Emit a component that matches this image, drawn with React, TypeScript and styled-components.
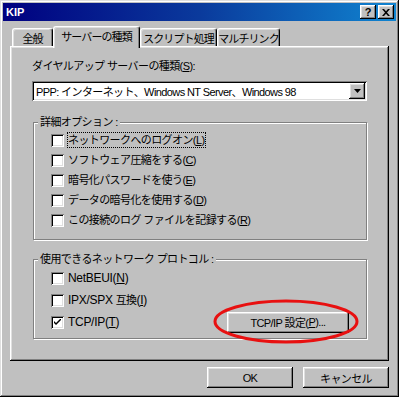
import React from 'react'
import styled, { createGlobalStyle } from 'styled-components'

const GlobalStyle = createGlobalStyle`
  html, body {
    margin: 0;
    padding: 0;
    background: #c0c0c0;
  }
  body {
    font-family: "Liberation Sans", "Noto Sans CJK JP", sans-serif;
    font-size: 11px;
    letter-spacing: -0.6px;
    color: #000;
  }
`

const raised = `
  box-shadow: inset -1px -1px #000, inset 1px 1px #fff, inset -2px -2px #808080, inset 2px 2px #dfdfdf;
`

const sunken = `
  box-shadow: inset 1px 1px #808080, inset -1px -1px #fff, inset 2px 2px #000, inset -2px -2px #dfdfdf;
`

const Window = styled.div`
  width: 399px;
  height: 397px;
  box-sizing: border-box;
  padding: 3px;
  background: #c0c0c0;
  box-shadow: inset -1px -1px #000, inset 1px 1px #dfdfdf, inset -2px -2px #808080, inset 2px 2px #fff;
  display: flex;
  flex-direction: column;
`

const TitleBar = styled.div`
  height: 18px;
  display: flex;
  align-items: center;
  padding: 0 2px 0 3px;
  background: linear-gradient(90deg, #000080 0%, #0a3a9c 50%, #1084d0 100%);
`

const TitleText = styled.span`
  flex: 1;
  color: #fff;
  font-family: "Liberation Sans", sans-serif;
  font-weight: bold;
  font-size: 11px;
  letter-spacing: 0;
`

const TitleButton = styled.div<{ gap?: number }>`
  width: 16px;
  height: 14px;
  margin-left: ${({ gap }) => gap ?? 0}px;
  background: #c0c0c0;
  ${raised}
  display: flex;
  align-items: center;
  justify-content: center;
  font-family: "Liberation Sans", sans-serif;
  font-weight: bold;
  font-size: 11px;
  letter-spacing: 0;
  line-height: 14px;
`

const Body = styled.div`
  padding: 5px 7px 0 7px;
  display: flex;
  flex-direction: column;
`

const TabRow = styled.div`
  height: 20px;
  display: flex;
  align-items: flex-end;
  padding-left: 2px;
`

const Tab = styled.div<{ width: number; active?: boolean }>`
  position: relative;
  z-index: ${({ active }) => (active ? 1 : 0)};
  flex: none;
  width: ${({ width }) => width}px;
  height: ${({ active }) => (active ? 22 : 18)}px;
  margin-bottom: ${({ active }) => (active ? -2 : 0)}px;
  box-sizing: border-box;
  background: #c0c0c0;
  border-top: 1px solid #fff;
  border-left: 1px solid #fff;
  border-right: 1px solid #000;
  border-radius: 3px 3px 0 0;
  box-shadow: inset -1px 0 #808080, inset 1px 1px #dfdfdf;
  display: flex;
  align-items: center;
  justify-content: center;
  padding-bottom: ${({ active }) => (active ? 3 : 0)}px;
  white-space: nowrap;
  overflow: hidden;
  font-size: 11px;
  letter-spacing: -0.9px;
`

const Panel = styled.div`
  height: 315px;
  box-sizing: border-box;
  padding: 13px 22px 0 22px;
  box-shadow: inset -1px -1px #000, inset 1px 1px #fff, inset -2px -2px #808080, inset 2px 2px #dfdfdf;
  display: flex;
  flex-direction: column;
`

const FieldLabel = styled.div`
  line-height: 14px;
  height: 14px;
  white-space: nowrap;
`

const ComboBox = styled.div`
  margin-top: 8px;
  height: 20px;
  box-sizing: border-box;
  padding: 2px;
  background: #fff;
  ${sunken}
  display: flex;
  align-items: center;
`

const ComboText = styled.div`
  flex: 1;
  padding-left: 2px;
  white-space: nowrap;
  overflow: hidden;
`

const ArrowButton = styled.div`
  width: 16px;
  height: 16px;
  background: #c0c0c0;
  ${raised}
  display: flex;
  align-items: center;
  justify-content: center;
`

const Group = styled.div<{ top: number; bottom: number }>`
  position: relative;
  margin: ${({ top }) => top}px 0 0 1px;
  padding-bottom: ${({ bottom }) => bottom}px;
  border: 1px solid #808080;
  box-shadow: 1px 1px 0 #fff, inset 1px 1px 0 #fff;
  display: flex;
  flex-direction: column;
`

const Legend = styled.div`
  align-self: flex-start;
  margin: -8px 0 0 4px;
  padding: 0 2px;
  background: #c0c0c0;
  line-height: 14px;
  height: 14px;
  white-space: nowrap;
`

const Rows = styled.div<{ top: number }>`
  margin-top: ${({ top }) => top}px;
  padding: 0 17px 0 17px;
  display: flex;
  flex-direction: column;
`

const CheckRow = styled.div<{ h: number }>`
  height: ${({ h }) => h}px;
  display: flex;
  align-items: center;
  white-space: nowrap;
`

const CheckBox = styled.div`
  width: 13px;
  height: 13px;
  flex: none;
  box-sizing: border-box;
  background: #fff;
  ${sunken}
  display: flex;
  align-items: center;
  justify-content: center;
  margin-right: 3px;
`

const CheckLabel = styled.span<{ focused?: boolean }>`
  line-height: 14px;
  padding: 1px 1px;
  outline: ${({ focused }) => (focused ? '1px dotted #000' : 'none')};
  outline-offset: -1px;
`

const Latin = styled.span`
  font-size: 12px;
  letter-spacing: -0.3px;
`

const Key = styled.u`
  text-decoration: underline;
  text-underline-offset: 1px;
`

const ButtonWrap = styled.div`
  position: relative;
  margin-left: auto;
`

const PushButton = styled.div<{ width: number }>`
  width: ${({ width }) => width}px;
  height: 21px;
  box-sizing: border-box;
  background: #c0c0c0;
  ${raised}
  display: flex;
  align-items: center;
  justify-content: center;
  white-space: nowrap;
`

const Annotation = styled.svg`
  position: absolute;
  left: -14px;
  top: -13px;
  pointer-events: none;
`

const Footer = styled.div`
  margin-top: 6px;
  display: flex;
  justify-content: flex-end;
  gap: 10px;
`

const Check = () => (
  <svg width="7" height="7" viewBox="0 0 7 7">
    <path d="M0 2 L0 4 L2 6 L7 1 L7 -1 L2 4 Z" fill="#000" />
  </svg>
)

type OptionProps = {
  label: React.ReactNode
  mnemonic: string
  checked?: boolean
  focused?: boolean
  latin?: boolean
  h: number
  children?: React.ReactNode
}

const Option = (props: OptionProps) => (
  <CheckRow h={props.h}>
    <CheckBox>{props.checked && <Check />}</CheckBox>
    <CheckLabel focused={props.focused}>
      {props.label}
      {props.latin ? (
        <Latin>(<Key>{props.mnemonic}</Key>)</Latin>
      ) : (
        <>(<Key>{props.mnemonic}</Key>)</>
      )}
    </CheckLabel>
    {props.children}
  </CheckRow>
)

const App = () => {
  return (
    <React.Fragment>
      <GlobalStyle />
      <Window>
        <TitleBar>
          <TitleText>KIP</TitleText>
          <TitleButton>?</TitleButton>
          <TitleButton gap={2}>
            <svg width="8" height="7" viewBox="0 0 8 7">
              <path d="M0 0h2l2 2.2L6 0h2L5 3.5 8 7H6L4 4.8 2 7H0l3-3.5z" fill="#000" />
            </svg>
          </TitleButton>
        </TitleBar>

        <Body>
          <TabRow>
            <Tab width={41}>全般</Tab>
            <Tab width={87} active>サーバーの種類</Tab>
            <Tab width={77}>スクリプト処理</Tab>
            <Tab width={63}>マルチリンク</Tab>
          </TabRow>

          <Panel>
            <FieldLabel>ダイヤルアップ サーバーの種類(<Key>S</Key>):</FieldLabel>
            <ComboBox>
              <ComboText>PPP: インターネット、Windows NT Server、Windows 98</ComboText>
              <ArrowButton>
                <svg width="7" height="4" viewBox="0 0 7 4">
                  <path d="M0 0h7L3.5 4z" fill="#000" />
                </svg>
              </ArrowButton>
            </ComboBox>

            <Group top={21} bottom={9}>
              <Legend>詳細オプション :</Legend>
              <Rows top={1}>
                <Option h={20} label="ネットワークへのログオン" mnemonic="L" focused />
                <Option h={20} label="ソフトウェア圧縮をする" mnemonic="C" />
                <Option h={20} label="暗号化パスワードを使う" mnemonic="E" />
                <Option h={20} label="データの暗号化を使用する" mnemonic="D" />
                <Option h={20} label="この接続のログ ファイルを記録する" mnemonic="R" />
              </Rows>
            </Group>

            <Group top={19} bottom={5}>
              <Legend>使用できるネットワーク プロトコル :</Legend>
              <Rows top={1}>
                <Option h={22} label={<Latin>NetBEUI</Latin>} mnemonic="N" latin />
                <Option h={22} label={<><Latin>IPX/SPX </Latin>互換</>} mnemonic="I" latin />
                <Option h={22} label={<Latin>TCP/IP</Latin>} mnemonic="T" latin checked>
                  <ButtonWrap>
                    <PushButton width={122}>TCP/IP 設定(<Key>P</Key>)...</PushButton>
                    <Annotation width="148" height="46" viewBox="0 0 148 46">
                      <ellipse cx="73" cy="22.5" rx="71" ry="20.5" fill="none" stroke="#e81010" strokeWidth="3" />
                    </Annotation>
                  </ButtonWrap>
                </Option>
              </Rows>
            </Group>
          </Panel>

          <Footer>
            <PushButton width={86}>OK</PushButton>
            <PushButton width={86}>キャンセル</PushButton>
          </Footer>
        </Body>
      </Window>
    </React.Fragment>
  )
}

export default App
